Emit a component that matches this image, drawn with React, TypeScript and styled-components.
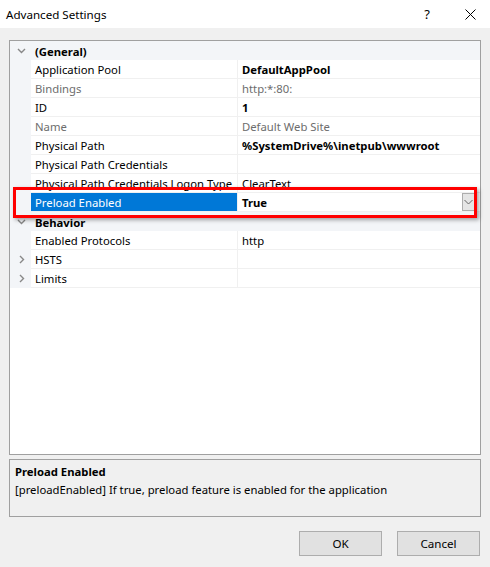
import { FC } from 'react';
import styled, { createGlobalStyle, css } from 'styled-components';

const GlobalStyle = createGlobalStyle`
  html, body {
    margin: 0;
    padding: 0;
  }
  body {
    font-family: 'Noto Sans', 'Open Sans', sans-serif;
    font-size: 11.3px;
    color: #000;
  }
`;

const Window = styled.div`
  width: 490px;
  height: 567px;
  background: #f0f0f0;
  display: flex;
  flex-direction: column;
  box-sizing: border-box;
  overflow: hidden;
`;

const TitleBar = styled.div`
  height: 28px;
  background: #fff;
  display: flex;
  align-items: center;
  padding-left: 6px;
  flex-shrink: 0;
`;

const Title = styled.div`
  flex: 1;
  font-size: 11.6px;
`;

const TitleButton = styled.div<{ $w: number }>`
  width: ${(p) => p.$w}px;
  height: 28px;
  display: flex;
  align-items: center;
  justify-content: center;
  font-size: 13px;
`;

const Content = styled.div`
  flex: 1;
  display: flex;
  flex-direction: column;
  padding: 12px 9px 0 9px;
`;

const Grid = styled.div`
  position: relative;
  height: 415px;
  box-sizing: border-box;
  border: 1px solid #a0a0a0;
  background: #fff;
  display: flex;
  flex-direction: column;
`;

const Row = styled.div<{ $category?: boolean }>`
  display: grid;
  grid-template-columns: 21px 207px 1fr;
  height: 19px;
  background: ${(p) => (p.$category ? '#f3f5f8' : '#fff')};
`;

const Gutter = styled.div`
  background: #f3f5f8;
  display: flex;
  align-items: center;
  justify-content: center;
  padding-left: 1px;
`;

const Cell = styled.div<{ $muted?: boolean; $bold?: boolean; $selected?: boolean; $divider?: boolean }>`
  box-sizing: border-box;
  border-bottom: 1px solid #f0f0f0;
  ${(p) => p.$divider && css`border-right: 1px solid #f0f0f0;`}
  padding: 1px 0 0 4px;
  display: flex;
  align-items: center;
  white-space: nowrap;
  overflow: hidden;
  line-height: 17px;
  color: ${(p) => (p.$muted ? '#6d6d6d' : '#000')};
  font-weight: ${(p) => (p.$bold ? 700 : 400)};
  ${(p) =>
    p.$selected &&
    css`
      background: #0078d7;
      color: #fff;
    `}
`;

const CategoryCell = styled.div`
  grid-column: 2 / 4;
  padding: 1px 0 0 4px;
  display: flex;
  align-items: center;
  font-weight: 700;
  line-height: 17px;
`;

const EditorCell = styled(Cell)`
  padding-right: 5px;
  justify-content: space-between;
`;

const DropButton = styled.div`
  width: 11px;
  height: 16px;
  margin-top: -1px;
  border: 1px solid #adadad;
  background: #e5e5e5;
  display: flex;
  align-items: center;
  justify-content: center;
`;

const Highlight = styled.div`
  position: absolute;
  left: 3px;
  top: 146px;
  width: 464px;
  height: 31px;
  box-sizing: border-box;
  border: 3px solid #ff0000;
  box-shadow: 2px 2px 4px rgba(0, 0, 0, 0.35);
  pointer-events: none;
`;

const Description = styled.div`
  margin-top: 4px;
  height: 58px;
  box-sizing: border-box;
  border: 1px solid #a0a0a0;
  padding: 3px 5px;
  line-height: 18px;
`;

const DescTitle = styled.div`
  font-weight: 700;
`;

const Footer = styled.div`
  display: flex;
  justify-content: flex-end;
  gap: 15px;
  padding-top: 14px;
  padding-right: 1px;
`;

const Button = styled.button`
  width: 83px;
  height: 25px;
  background: #e1e1e1;
  border: 1px solid #adadad;
  font-family: inherit;
  font-size: 11.6px;
  color: #000;
  padding: 0;
`;

const Chevron: FC<{ open?: boolean }> = ({ open }) => (
  <svg width="9" height="9" viewBox="0 0 9 9">
    <path
      d={open ? 'M1 3 L4.5 6.5 L8 3' : 'M3 1 L6.5 4.5 L3 8'}
      fill="none"
      stroke="#888"
      strokeWidth="1.4"
    />
  </svg>
);

type Prop = {
  name: string;
  value?: string;
  muted?: boolean;
  bold?: boolean;
};

const general: Prop[] = [
  { name: 'Application Pool', value: 'DefaultAppPool', bold: true },
  { name: 'Bindings', value: 'http:*:80:', muted: true },
  { name: 'ID', value: '1', bold: true },
  { name: 'Name', value: 'Default Web Site', muted: true },
  { name: 'Physical Path', value: '%SystemDrive%\\inetpub\\wwwroot', bold: true },
  { name: 'Physical Path Credentials', value: '' },
  { name: 'Physical Path Credentials Logon Type', value: 'ClearText' },
];

const PropRow: FC<{ prop: Prop }> = ({ prop }) => (
  <Row>
    <Gutter />
    <Cell $muted={prop.muted} $divider>
      {prop.name}
    </Cell>
    <Cell $muted={prop.muted} $bold={prop.bold}>
      {prop.value}
    </Cell>
  </Row>
);

const App: FC = () => (
  <>
    <GlobalStyle />
    <Window>
      <TitleBar>
        <Title>Advanced Settings</Title>
        <TitleButton $w={46}>?</TitleButton>
        <TitleButton $w={40}>
          <svg width="11" height="11" viewBox="0 0 11 11">
            <path d="M0.5 0.5 L10.5 10.5 M10.5 0.5 L0.5 10.5" stroke="#000" strokeWidth="1" />
          </svg>
        </TitleButton>
      </TitleBar>
      <Content>
        <Grid>
          <Row $category>
            <Gutter>
              <Chevron open />
            </Gutter>
            <CategoryCell>(General)</CategoryCell>
          </Row>
          {general.map((p) => (
            <PropRow key={p.name} prop={p} />
          ))}
          <Row>
            <Gutter />
            <Cell $selected $divider>
              Preload Enabled
            </Cell>
            <EditorCell $bold>
              True
              <DropButton>
                <svg width="9" height="6" viewBox="0 0 9 6">
                  <path d="M0.5 1 L4.5 5 L8.5 1" fill="none" stroke="#666" strokeWidth="1" />
                </svg>
              </DropButton>
            </EditorCell>
          </Row>
          <Row $category>
            <Gutter>
              <Chevron open />
            </Gutter>
            <CategoryCell>Behavior</CategoryCell>
          </Row>
          <PropRow prop={{ name: 'Enabled Protocols', value: 'http' }} />
          <Row>
            <Gutter>
              <Chevron />
            </Gutter>
            <Cell $divider>HSTS</Cell>
            <Cell />
          </Row>
          <Row>
            <Gutter>
              <Chevron />
            </Gutter>
            <Cell $divider>Limits</Cell>
            <Cell />
          </Row>
          <Highlight />
        </Grid>
        <Description>
          <DescTitle>Preload Enabled</DescTitle>
          <div>[preloadEnabled] If true, preload feature is enabled for the application</div>
        </Description>
        <Footer>
          <Button>OK</Button>
          <Button>Cancel</Button>
        </Footer>
      </Content>
    </Window>
  </>
);

export default App;
